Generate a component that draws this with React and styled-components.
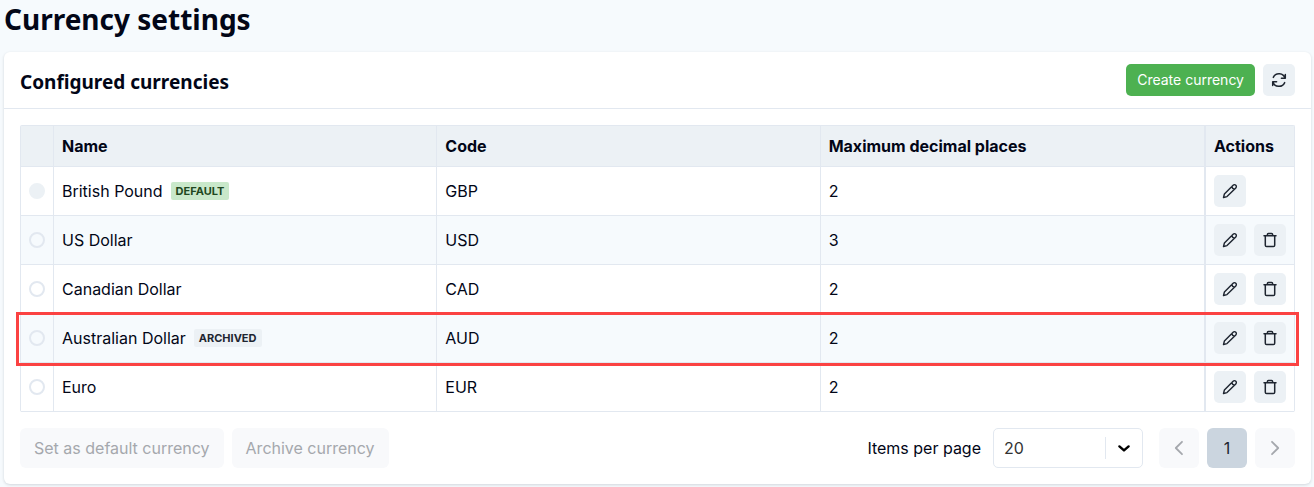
import React from "react";
import styled, { createGlobalStyle } from "styled-components";

const GlobalStyle = createGlobalStyle`
  *, *::before, *::after { box-sizing: border-box; }
  body {
    margin: 0;
    background: #f6fafd;
    color: #020617;
    font: 16px/24px Inter, "Liberation Sans", sans-serif;
  }
  button, select, input { font: inherit; margin: 0; }
`;

const Page = styled.main`
  padding: 0 3px 3px 4px;
`;

const PageTitle = styled.h1`
  margin: 0 0 14px;
  font: 700 28px/38px "Noto Sans", "Open Sans", sans-serif;
`;

const Card = styled.section`
  background: #fff;
  border-radius: 6px;
  box-shadow: 0 1px 3px rgba(15, 23, 42, 0.16);
`;

const CardHeader = styled.header`
  display: flex;
  align-items: center;
  justify-content: space-between;
  padding: 12px 16px;
  border-bottom: 1px solid #e2e8f0;
`;

const CardTitle = styled.h2`
  margin: 0;
  padding-top: 4px;
  font: 700 19px/28px "Noto Sans", "Open Sans", sans-serif;
`;

const CardBody = styled.div`
  display: flex;
  flex-direction: column;
  gap: 16px;
  padding: 16px;
`;

const Group = styled.div`
  display: flex;
  align-items: center;
  gap: 8px;
`;

const PrimaryButton = styled.button`
  height: 32px;
  padding: 0 11px;
  border: 0;
  border-radius: 5px;
  background: #4db151;
  color: #fff;
  font-size: 14px;
  white-space: nowrap;
`;

const IconButton = styled.button`
  display: flex;
  align-items: center;
  justify-content: center;
  width: 32px;
  height: 32px;
  padding: 0;
  border: 0;
  border-radius: 5px;
  background: #ecf1f5;
  color: #1e2530;
`;

const Table = styled.table`
  width: 100%;
  table-layout: fixed;
  border: 1px solid #e2e8f0;
  border-bottom: 0;
  border-radius: 2px;
  border-spacing: 0;
`;

const Col = styled.col`
  width: ${(p) => p.$width || "auto"};
`;

const HeadCell = styled.th`
  height: 41px;
  padding: 0 8px;
  background: #ecf1f5;
  border-bottom: 1px solid #e2e8f0;
  border-right: ${(p) => (p.$plain ? 0 : "1px solid #e2e8f0")};
  border-left: ${(p) => (p.$actions ? "2px solid #e2e8f0" : 0)};
  font-weight: 700;
  text-align: left;
`;

const Row = styled.tr`
  position: relative;
  background: ${(p) => (p.$striped ? "#f6fafd" : "#fff")};
`;

const RowHighlight = styled.span`
  position: absolute;
  z-index: 1;
  inset: -2px -5px -3px;
  border: 3px solid #fb4242;
  pointer-events: none;
`;

const Cell = styled.td`
  height: 49px;
  padding: 0 8px;
  border-bottom: 1px solid #e2e8f0;
  border-right: ${(p) => (p.$plain ? 0 : "1px solid #e2e8f0")};
  border-left: ${(p) => (p.$actions ? "2px solid #e2e8f0" : 0)};
`;

const Radio = styled.input`
  appearance: none;
  display: block;
  width: 16px;
  height: 16px;
  border: 2px solid #e2e8f0;
  border-radius: 50%;

  &:disabled {
    border-color: #ecf1f5;
    background: #ecf1f5;
  }
`;

const Tag = styled.span`
  padding: 0 5px;
  border-radius: 2px;
  background: ${(p) => (p.$tone === "green" ? "#c9e8ca" : "#ecf1f5")};
  color: ${(p) => (p.$tone === "green" ? "#1f4721" : "#1e2530")};
  font-size: 11px;
  line-height: 18px;
  font-weight: 700;
`;

const Footer = styled.footer`
  display: flex;
  align-items: center;
  justify-content: space-between;
`;

const SecondaryButton = styled.button`
  height: 40px;
  padding: 0 14px;
  border: 0;
  border-radius: 6px;
  background: #f8f9fb;
  color: #a5a8ad;
  white-space: nowrap;
`;

const PageSizeLabel = styled.label`
  margin-right: 4px;
`;

const SelectBox = styled.div`
  position: relative;
  width: 150px;
  margin-right: 8px;
`;

const Select = styled.select`
  appearance: none;
  display: block;
  width: 100%;
  height: 40px;
  padding: 0 40px 0 10px;
  border: 1px solid #e2e8f0;
  border-radius: 5px;
  background: #fff;
  color: #333;
`;

const SelectArrow = styled.span`
  position: absolute;
  top: 9px;
  right: 1px;
  bottom: 9px;
  display: flex;
  align-items: center;
  justify-content: center;
  width: 37px;
  border-left: 1px solid #e2e8f0;
  color: #000;
  pointer-events: none;
`;

const PageButton = styled.button`
  display: flex;
  align-items: center;
  justify-content: center;
  width: 40px;
  height: 40px;
  padding: 0;
  border: 0;
  border-radius: 6px;
  background: ${(p) => (p.$current ? "#cbd5df" : "#f8f9fb")};
  color: ${(p) => (p.$current ? "#1e2530" : "#a5a8ad")};
`;

const Icon = styled.svg.attrs({
  width: 16,
  height: 16,
  viewBox: "0 0 16 16",
  fill: "none",
  stroke: "currentColor",
  strokeLinecap: "round",
  strokeLinejoin: "round",
  "aria-hidden": true,
})`
  display: block;
  stroke-width: ${(p) => p.$weight || 1.5};
`;

const RefreshIcon = () => (
  <Icon>
    <path d="M14.1 6.3A6.3 6.3 0 0 0 2.3 5.4M1.9 9.7a6.3 6.3 0 0 0 11.8.9M14.3 2.4v3.9h-3.9M1.7 13.6V9.7h3.9" />
  </Icon>
);

const PencilIcon = () => (
  <Icon $weight={1.4}>
    <path d="M1.5 14.5l.9-3.5 8.7-8.8a1.9 1.9 0 0 1 2.7 2.7L5 13.6zM9.9 3.5c.1 1.5 1 2.4 2.6 2.6" />
  </Icon>
);

const TrashIcon = () => (
  <Icon>
    <path d="M2 3.7h12M3.3 3.7v9.6c0 .8.5 1.3 1.3 1.3h6.8c.8 0 1.3-.5 1.3-1.3V3.7M5.4 3.5V2.4c0-.6.4-1 1-1h3.2c.6 0 1 .4 1 1v1.1" />
  </Icon>
);

const currencies = [
  { name: "British Pound", code: "GBP", places: 2, tag: "DEFAULT", tone: "green", isDefault: true },
  { name: "US Dollar", code: "USD", places: 3 },
  { name: "Canadian Dollar", code: "CAD", places: 2 },
  { name: "Australian Dollar", code: "AUD", places: 2, tag: "ARCHIVED", tone: "grey", highlighted: true },
  { name: "Euro", code: "EUR", places: 2 },
];

export default function App() {
  return (
    <Page>
      <GlobalStyle />
      <PageTitle>Currency settings</PageTitle>
      <Card>
        <CardHeader>
          <CardTitle>Configured currencies</CardTitle>
          <Group>
            <PrimaryButton type="button">Create currency</PrimaryButton>
            <IconButton type="button" aria-label="Refresh">
              <RefreshIcon />
            </IconButton>
          </Group>
        </CardHeader>
        <CardBody>
          <Table>
            <colgroup>
              <Col $width="33px" />
              <Col />
              <Col />
              <Col />
              <Col $width="90px" />
            </colgroup>
            <thead>
              <tr>
                <HeadCell aria-label="Select" />
                <HeadCell>Name</HeadCell>
                <HeadCell>Code</HeadCell>
                <HeadCell $plain>Maximum decimal places</HeadCell>
                <HeadCell $plain $actions>Actions</HeadCell>
              </tr>
            </thead>
            <tbody>
              {currencies.map((c, i) => (
                <Row key={c.code} $striped={i % 2 === 1}>
                  <Cell>
                    <Radio
                      type="radio"
                      name="currency"
                      value={c.code}
                      disabled={c.isDefault}
                      aria-label={c.name}
                    />
                    {c.highlighted && <RowHighlight />}
                  </Cell>
                  <Cell>
                    <Group>
                      {c.name}
                      {c.tag && <Tag $tone={c.tone}>{c.tag}</Tag>}
                    </Group>
                  </Cell>
                  <Cell>{c.code}</Cell>
                  <Cell $plain>{c.places}</Cell>
                  <Cell $plain $actions>
                    <Group>
                      <IconButton type="button" aria-label={`Edit ${c.name}`}>
                        <PencilIcon />
                      </IconButton>
                      {!c.isDefault && (
                        <IconButton type="button" aria-label={`Delete ${c.name}`}>
                          <TrashIcon />
                        </IconButton>
                      )}
                    </Group>
                  </Cell>
                </Row>
              ))}
            </tbody>
          </Table>
          <Footer>
            <Group>
              <SecondaryButton type="button" disabled>Set as default currency</SecondaryButton>
              <SecondaryButton type="button" disabled>Archive currency</SecondaryButton>
            </Group>
            <Group>
              <PageSizeLabel htmlFor="page-size">Items per page</PageSizeLabel>
              <SelectBox>
                <Select id="page-size" defaultValue="20">
                  <option>20</option>
                  <option>50</option>
                </Select>
                <SelectArrow>
                  <Icon $weight={2.4}>
                    <path d="M3.4 6.4L8 10.4l4.6-4" />
                  </Icon>
                </SelectArrow>
              </SelectBox>
              <PageButton type="button" disabled aria-label="Previous page">
                <Icon $weight={1.8}>
                  <path d="M11 1.8L4.8 8l6.2 6.2" />
                </Icon>
              </PageButton>
              <PageButton type="button" $current aria-current="page">1</PageButton>
              <PageButton type="button" disabled aria-label="Next page">
                <Icon $weight={1.8}>
                  <path d="M5 1.8L11.2 8 5 14.2" />
                </Icon>
              </PageButton>
            </Group>
          </Footer>
        </CardBody>
      </Card>
    </Page>
  );
}
